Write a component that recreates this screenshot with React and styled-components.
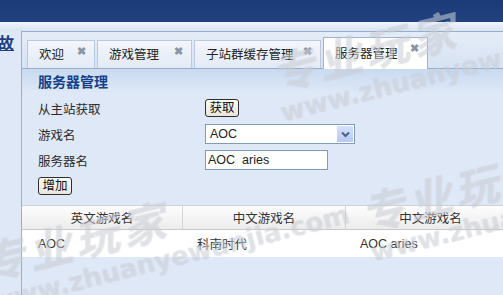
import styled, { createGlobalStyle } from "styled-components";

const GlobalStyle = createGlobalStyle`
  html, body {
    margin: 0;
    padding: 0;
    width: 503px;
    height: 295px;
    overflow: hidden;
    background: #dfe8f6;
    font-family: "Liberation Sans", "Noto Sans CJK SC", sans-serif;
    font-size: 12px;
    color: #222;
  }
`;

const Page = styled.div`
  position: relative;
  width: 503px;
  height: 295px;
  overflow: hidden;
  display: flex;
  flex-direction: column;
`;

const TopBar = styled.div`
  height: 22px;
  flex: none;
  background: linear-gradient(#1a3a78, #21427f);
`;

const Strip = styled.div`
  height: 9px;
  flex: none;
  background: linear-gradient(#f1f5fb, #d9e4f3);
`;

const Main = styled.div`
  flex: 1;
  display: flex;
`;

const LeftCol = styled.div`
  width: 21px;
  flex: none;
  overflow: hidden;
  display: flex;
  justify-content: flex-end;
  padding-top: 3px;
`;

const NavLink = styled.a`
  font-size: 16px;
  font-weight: bold;
  color: #1c3f80;
  text-decoration: underline;
  white-space: nowrap;
  margin-right: 7px;
  line-height: 20px;
`;

const Panel = styled.div`
  flex: 1;
  border-left: 1px solid #99aece;
  border-top: 1px solid #99aece;
  display: flex;
  flex-direction: column;
`;

const TabStrip = styled.div`
  height: 36px;
  display: flex;
  align-items: flex-end;
  gap: 2px;
  padding-left: 5px;
  border-bottom: 1px solid #99aece;
  background: linear-gradient(#e4ecf7, #d7e3f3);
`;

const Tab = styled.div`
  height: ${(p) => (p.$active ? 32 : 28)}px;
  width: ${(p) => p.$w}px;
  box-sizing: border-box;
  display: flex;
  align-items: center;
  justify-content: space-between;
  padding: 0 8px 3px 11px;
  font-size: 12.5px;
  color: #222;
  background: ${(p) => (p.$active ? "#fff" : "linear-gradient(#f3f6fb, #e2eaf5)")};
  border: 1px solid ${(p) => (p.$active ? "#9fb3d0" : "#b9c9df")};
  border-bottom: none;
  margin-bottom: ${(p) => (p.$active ? -1 : 0)}px;
`;

const Close = styled.span`
  font-size: 11px;
  font-weight: bold;
  color: #8a95a5;
  align-self: flex-start;
  margin-top: 4px;
`;

const Header = styled.div`
  height: 23px;
  display: flex;
  align-items: center;
  padding-left: 16px;
  font-size: 14px;
  font-weight: bold;
  color: #15408a;
  background: linear-gradient(#c9daf0, #dde8f6);
`;

const Form = styled.div`
  display: grid;
  grid-template-columns: 167px auto;
  grid-auto-rows: 26px;
  align-items: center;
  padding: 3px 0 0 16px;
`;

const Label = styled.span`
  font-size: 12.5px;
  color: #2a2a2a;
`;

const Button = styled.button`
  font-family: "Liberation Sans", "Noto Sans CJK SC", sans-serif;
  font-size: 12.5px;
  height: 18px;
  width: 34px;
  padding: 0;
  border: 1px solid #2f2f2f;
  border-radius: 3px;
  background: linear-gradient(#fbfbf8, #e8e6dc);
  color: #111;
  line-height: 14px;
  justify-self: start;
`;

const Select = styled.div`
  width: 150px;
  height: 20px;
  box-sizing: border-box;
  border: 1px solid #7f9db9;
  background: #fff;
  display: flex;
  align-items: center;
  justify-content: space-between;
  padding-left: 4px;
  font-size: 12.5px;
`;

const Arrow = styled.span`
  width: 16px;
  height: 16px;
  margin-right: 1px;
  background: linear-gradient(#d5e1fb, #b6c9f4);
  display: flex;
  align-items: center;
  justify-content: center;
`;

const Input = styled.div`
  width: 123px;
  height: 20px;
  box-sizing: border-box;
  border: 1px solid #7f9db9;
  background: #fff;
  display: flex;
  align-items: center;
  padding-left: 2px;
  font-size: 12.5px;
  white-space: pre;
`;

const Table = styled.div`
  margin-top: 6px;
  display: grid;
  grid-template-columns: 161px 163px 170px;
`;

const Th = styled.div`
  height: 23px;
  display: flex;
  align-items: center;
  justify-content: center;
  font-size: 12.5px;
  color: #333;
  background: linear-gradient(#fdfdfd, #ececec);
  border-top: 1px solid #d0d0d0;
  border-bottom: 1px solid #c8c8c8;
  border-right: 1px solid #d4d4d4;
`;

const Td = styled.div`
  height: 27px;
  display: flex;
  align-items: center;
  padding-left: ${(p) => p.$pad}px;
  font-size: 12.5px;
  color: #333;
  background: #fff;
`;

const Mark = styled.div`
  position: absolute;
  left: ${(p) => p.$x}px;
  top: ${(p) => p.$y}px;
  transform: rotate(-14deg);
  pointer-events: none;
  color: rgba(255, 255, 255, 0.35);
  text-shadow: 0 0 1px rgba(120, 130, 150, 0.35);
  font-weight: bold;
  white-space: nowrap;
  line-height: 1;
`;

const MarkBig = styled.div`
  font-size: 44px;
  letter-spacing: 4px;
  font-style: italic;
`;

const MarkSmall = styled.div`
  font-size: 26px;
  font-family: "DejaVu Sans", sans-serif;
  margin-top: 2px;
`;

const tabs = [
  { name: "欢迎", w: 68 },
  { name: "游戏管理", w: 95 },
  { name: "子站群缓存管理", w: 127 },
  { name: "服务器管理", w: 105, active: true },
];

function Watermark({ x, y }) {
  return (
    <Mark $x={x} $y={y}>
      <MarkBig>专业玩家</MarkBig>
      <MarkSmall>www.zhuanyewanjia.com</MarkSmall>
    </Mark>
  );
}

export default function App() {
  return (
    <Page>
      <GlobalStyle />
      <TopBar />
      <Strip />
      <Main>
        <LeftCol>
          <NavLink href="#">故</NavLink>
        </LeftCol>
        <Panel>
          <TabStrip>
            {tabs.map((t) => (
              <Tab key={t.name} $w={t.w} $active={t.active}>
                <span>{t.name}</span>
                <Close>✖</Close>
              </Tab>
            ))}
          </TabStrip>
          <Header>服务器管理</Header>
          <Form>
            <Label>从主站获取</Label>
            <Button>获取</Button>
            <Label>游戏名</Label>
            <Select>
              <span>AOC</span>
              <Arrow>
                <svg width="9" height="7" viewBox="0 0 9 7">
                  <path d="M1 1.5 L4.5 5 L8 1.5" fill="none" stroke="#4d6185" strokeWidth="2" />
                </svg>
              </Arrow>
            </Select>
            <Label>服务器名</Label>
            <Input>AOC  aries</Input>
            <Button>增加</Button>
          </Form>
          <Table>
            <Th>英文游戏名</Th>
            <Th>中文游戏名</Th>
            <Th>中文游戏名</Th>
            <Td $pad={16}>AOC</Td>
            <Td $pad={14}>科南时代</Td>
            <Td $pad={14}>AOC aries</Td>
          </Table>
        </Panel>
      </Main>
      <Watermark x={270} y={10} />
      <Watermark x={-20} y={200} />
      <Watermark x={360} y={150} />
    </Page>
  );
}
